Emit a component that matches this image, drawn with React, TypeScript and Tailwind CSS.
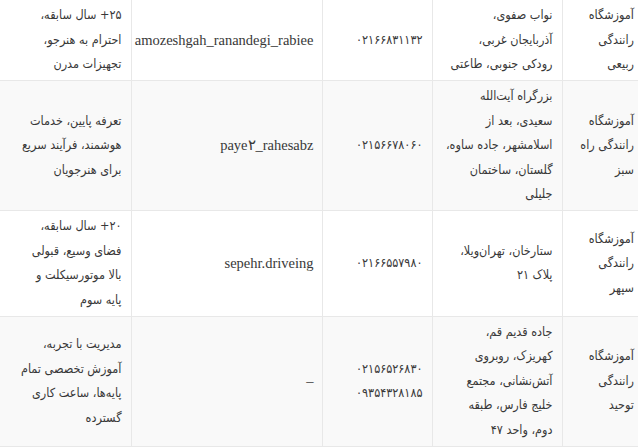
import React from 'react';

type Row = {
  name: string[];
  address: string[];
  phones: string[];
  instagram: string;
  features: string[];
};

const rows: Row[] = [
  {
    name: ['آموزشگاه', 'رانندگی', 'ربیعی'],
    address: ['نواب صفوی،', 'آذربایجان غربی،', 'رودکی جنوبی، طاعتی'],
    phones: ['۰۲۱۶۶۸۳۱۱۳۲'],
    instagram: 'amozeshgah_ranandegi_rabiee',
    features: ['۲۵+ سال سابقه،', 'احترام به هنرجو،', 'تجهیزات مدرن'],
  },
  {
    name: ['آموزشگاه', 'رانندگی راه', 'سبز'],
    address: [
      'بزرگراه آیت‌الله',
      'سعیدی، بعد از',
      'اسلامشهر، جاده ساوه،',
      'گلستان، ساختمان',
      'جلیلی',
    ],
    phones: ['۰۲۱۵۶۶۷۸۰۶۰'],
    instagram: 'paye۲_rahesabz',
    features: ['تعرفه پایین، خدمات', 'هوشمند، فرآیند سریع', 'برای هنرجویان'],
  },
  {
    name: ['آموزشگاه', 'رانندگی', 'سپهر'],
    address: ['ستارخان، تهران‌ویلا،', 'پلاک ۲۱'],
    phones: ['۰۲۱۶۶۵۵۷۹۸۰'],
    instagram: 'sepehr.driveing',
    features: ['۲۰+ سال سابقه،', 'فضای وسیع، قبولی', 'بالا موتورسیکلت و', 'پایه سوم'],
  },
  {
    name: ['آموزشگاه', 'رانندگی', 'توحید'],
    address: [
      'جاده قدیم قم،',
      'کهریزک، روبروی',
      'آتش‌نشانی، مجتمع',
      'خلیج فارس، طبقه',
      'دوم، واحد ۴۷',
    ],
    phones: ['۰۲۱۵۶۵۲۶۸۳۰', '۰۹۳۵۴۳۲۸۱۸۵'],
    instagram: '–',
    features: ['مدیریت با تجربه،', 'آموزش تخصصی تمام', 'پایه‌ها، ساعت کاری', 'گسترده'],
  },
];

const Lines = ({ lines }: { lines: string[] }) => (
  <>
    {lines.map((l, i) => (
      <div key={i} className="whitespace-nowrap">
        {l}
      </div>
    ))}
  </>
);

const cell = 'border border-[#e8e8e8] align-middle text-right py-[3.25px]';

export default function App() {
  return (
    <div className="w-[638px] h-[447px] overflow-hidden bg-white">
      <table
        dir="rtl"
        className="border-collapse table-fixed w-[640px] text-[12.5px] leading-[24.5px] text-[#383838] font-['DejaVu_Sans_Condensed','DejaVu_Sans',sans-serif]"
      >
        <colgroup>
          <col className="w-[78px]" />
          <col className="w-[130px]" />
          <col className="w-[110px]" />
          <col className="w-[191px]" />
          <col className="w-[131px]" />
        </colgroup>
        <tbody>
          {rows.map((r, i) => (
            <tr key={i} className={i % 2 === 1 ? 'bg-[#f9f9f9]' : 'bg-white'}>
              <td className={`${cell} pr-[6px] pl-0 border-t-0 border-r-0`}>
                <Lines lines={r.name} />
              </td>
              <td className={`${cell} pr-[9px] ${i === 0 ? 'border-t-0' : ''}`}>
                <Lines lines={r.address} />
              </td>
              <td className={`${cell} pr-[9px] ${i === 0 ? 'border-t-0' : ''}`}>
                <Lines lines={r.phones} />
              </td>
              <td
                className={`${cell} pr-[8px] text-[14.5px] [font-family:'Liberation_Serif','Times_New_Roman',serif] ${i === 0 ? 'border-t-0' : ''}`}
              >
                <div className="whitespace-nowrap">{r.instagram}</div>
              </td>
              <td className={`${cell} pr-[9px] border-l-0 ${i === 0 ? 'border-t-0' : ''}`}>
                <Lines lines={r.features} />
              </td>
            </tr>
          ))}
        </tbody>
      </table>
    </div>
  );
}
